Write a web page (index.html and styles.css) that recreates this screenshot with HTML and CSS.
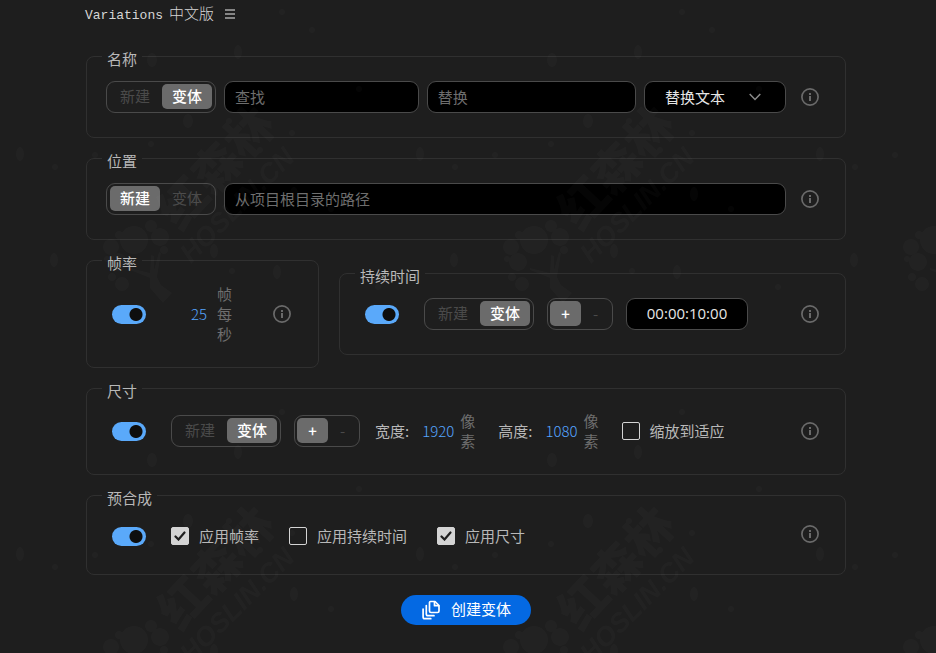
FILE: index.html
```html
<!DOCTYPE html>
<html lang="zh-CN">
<head>
    <meta charset="UTF-8">
    <meta name="viewport" content="width=device-width, initial-scale=1.0">
    <title>Variations 中文版</title>
    <link rel="stylesheet" href="styles.css">
</head>
<body>
    <!-- shared icons -->
    <svg class="sprite" aria-hidden="true">
        <symbol id="icon-info" viewBox="0 0 18 18">
            <circle cx="9" cy="9" r="8.1" fill="none" stroke="currentColor" stroke-width="1.7"/>
            <rect x="8" y="5" width="2" height="2" fill="currentColor"/>
            <rect x="8" y="8" width="2" height="5" fill="currentColor"/>
        </symbol>
    </svg>

    <header class="titlebar">
        <h1 class="title"><span class="title-latin">Variations</span> <span>中文版</span></h1>
        <button type="button" class="menu-btn" aria-label="菜单">
            <svg width="10" height="10" viewBox="0 0 10 10" fill="#858585">
                <rect width="10" height="2"/>
                <rect y="4" width="10" height="2"/>
                <rect y="8" width="10" height="2"/>
            </svg>
        </button>
    </header>

    <form class="variations">
        <!-- name -->
        <fieldset class="panel">
            <legend>名称</legend>
            <div class="row row-fields">
                <div class="segment">
                    <button type="button">新建</button>
                    <button type="button" class="active">变体</button>
                </div>
                <input type="text" class="field field-find" placeholder="查找" aria-label="查找">
                <input type="text" class="field field-replace" placeholder="替换" aria-label="替换">
                <select class="field select" aria-label="替换方式">
                    <option>替换文本</option>
                </select>
                <button type="button" class="info" aria-label="信息"><svg><use href="#icon-info"/></svg></button>
            </div>
        </fieldset>

        <!-- location -->
        <fieldset class="panel">
            <legend>位置</legend>
            <div class="row row-fields">
                <div class="segment">
                    <button type="button" class="active">新建</button>
                    <button type="button">变体</button>
                </div>
                <input type="text" class="field field-path" placeholder="从项目根目录的路径" aria-label="路径">
                <button type="button" class="info" aria-label="信息"><svg><use href="#icon-info"/></svg></button>
            </div>
        </fieldset>

        <div class="columns">
            <!-- frame rate -->
            <fieldset class="panel panel-fps">
                <legend>帧率</legend>
                <div class="row">
                    <input type="checkbox" class="toggle" aria-label="帧率" checked>
                    <div class="value value-fps">
                        <button type="button" class="number">25</button>
                        <span class="unit">帧每秒</span>
                    </div>
                    <button type="button" class="info" aria-label="信息"><svg><use href="#icon-info"/></svg></button>
                </div>
            </fieldset>

            <!-- duration -->
            <fieldset class="panel panel-duration">
                <legend>持续时间</legend>
                <div class="row">
                    <input type="checkbox" class="toggle" aria-label="持续时间" checked>
                    <div class="segment">
                        <button type="button">新建</button>
                        <button type="button" class="active">变体</button>
                    </div>
                    <div class="segment sign">
                        <button type="button" class="active">+</button>
                        <button type="button">-</button>
                    </div>
                    <input type="text" class="field timecode" value="00:00:10:00" aria-label="时间码">
                    <button type="button" class="info" aria-label="信息"><svg><use href="#icon-info"/></svg></button>
                </div>
            </fieldset>
        </div>

        <!-- size -->
        <fieldset class="panel panel-size">
            <legend>尺寸</legend>
            <div class="row">
                <input type="checkbox" class="toggle" aria-label="尺寸" checked>
                <div class="segment">
                    <button type="button">新建</button>
                    <button type="button" class="active">变体</button>
                </div>
                <div class="segment sign">
                    <button type="button" class="active">+</button>
                    <button type="button">-</button>
                </div>
                <div class="value">
                    <span class="value-name">宽度:</span>
                    <button type="button" class="number">1920</button>
                    <span class="unit">像素</span>
                </div>
                <div class="value value-height">
                    <span class="value-name">高度:</span>
                    <button type="button" class="number">1080</button>
                    <span class="unit">像素</span>
                </div>
                <label class="check check-fit"><input type="checkbox">缩放到适应</label>
                <button type="button" class="info" aria-label="信息"><svg><use href="#icon-info"/></svg></button>
            </div>
        </fieldset>

        <!-- precomps -->
        <fieldset class="panel panel-precomp">
            <legend>预合成</legend>
            <div class="row">
                <input type="checkbox" class="toggle" aria-label="预合成" checked>
                <div class="checks">
                    <label class="check"><input type="checkbox" checked>应用帧率</label>
                    <label class="check"><input type="checkbox">应用持续时间</label>
                    <label class="check"><input type="checkbox" checked>应用尺寸</label>
                </div>
                <button type="button" class="info" aria-label="信息"><svg><use href="#icon-info"/></svg></button>
            </div>
        </fieldset>

        <button type="button" class="create-btn">
            <svg width="18" height="20" viewBox="0 0 18 20" fill="none" stroke="#fff" stroke-width="1.7" stroke-linejoin="round" stroke-linecap="round">
                <path d="M8.500 1.500h4.500l4 4v5.500c0 .8-.6 1.500-1.500 1.500H9c-.8 0-1.500-.6-1.500-1.500V2.500c0-.6.4-1 1-1z"/>
                <path d="M12.500 1.800v3.900h4"/>
                <path d="M4.300 5.500v8.500c0 1 .7 1.700 1.700 1.700h6"/>
                <path d="M1.100 9v8c0 1 .7 1.700 1.700 1.700h6"/>
            </svg>
            <span class="create-text">创建变体</span>
        </button>
    </form>

    <!-- watermark -->
    <svg class="watermark" aria-hidden="true">
        <defs>
            <pattern id="mark" width="400" height="400" patternUnits="userSpaceOnUse">
                <circle cx="134" cy="240" r="14"/>
                <circle cx="111" cy="247" r="8"/>
                <circle cx="119" cy="235" r="4"/>
                <circle cx="118" cy="262" r="9"/>
                <circle cx="107" cy="259" r="3"/>
                <circle cx="151" cy="226" r="6"/>
                <circle cx="160" cy="237" r="9"/>
                <circle cx="164" cy="250" r="4"/>
                <circle cx="122" cy="284" r="7"/>
                <circle cx="112" cy="277" r="4"/>
                <path d="M130 268l20 5 1-18 3 1v14l5-18 2 1-4 24 4 8 11 8-9 10-13-15v-10l-20-8z"/>
                <text class="mark-name" transform="translate(180 232) rotate(-47)">红森林</text>
                <text class="mark-site" transform="translate(191 264) rotate(-45)">HOSLIN.CN</text>
                <ellipse cx="188" cy="121" rx="5" ry="7"/>
                <ellipse cx="214" cy="251" rx="4" ry="7"/>
                <ellipse cx="277" cy="272" rx="4" ry="7"/>
                <ellipse cx="294" cy="194" rx="4" ry="7"/>
                <ellipse cx="20" cy="154" rx="4" ry="7"/>
                <ellipse cx="54" cy="260" rx="4" ry="7"/>
                <ellipse cx="152" cy="60" rx="5" ry="7"/>
                <ellipse cx="238" cy="52" rx="4" ry="7"/>
                <circle cx="151" cy="144" r="3"/>
                <circle cx="229" cy="121" r="3"/>
                <circle cx="260" cy="150" r="3"/>
                <circle cx="292" cy="133" r="3"/>
                <circle cx="55" cy="167" r="3"/>
                <circle cx="95" cy="155" r="3"/>
                <circle cx="359" cy="89" r="3"/>
                <circle cx="312" cy="30" r="3"/>
                <circle cx="232" cy="271" r="3"/>
                <circle cx="378" cy="287" r="3"/>
                <circle cx="331" cy="209" r="3"/>
                <circle cx="282" cy="12" r="3"/>
            </pattern>
        </defs>
        <rect width="100%" height="100%" fill="url(#mark)"/>
    </svg>
</body>
</html>
```

FILE: styles.css
```css
* {
    box-sizing: border-box;
}

body {
    margin: 0;
    background: #1e1e1e;
    color: #b8b8b8;
    font-family: "Noto Sans CJK SC", sans-serif;
    font-size: 15px;
    line-height: 20px;
}

button,
input,
select {
    margin: 0;
    font: inherit;
    color: inherit;
}

button {
    padding: 0;
    border: none;
    background: none;
    cursor: pointer;
}

svg {
    display: block;
}

.sprite {
    position: absolute;
    width: 0;
    height: 0;
}

.titlebar {
    display: flex;
    align-items: center;
    gap: 11px;
    height: 28px;
    padding: 0 85px;
}

.title {
    display: flex;
    align-items: baseline;
    gap: 6px;
    margin: 0;
    font-size: 15px;
    font-weight: 300;
    color: #d6d6d6;
}

.title-latin {
    font-family: "Liberation Mono", monospace;
    font-size: 13px;
}

.variations {
    display: flex;
    flex-direction: column;
    gap: 6px;
    padding: 14px 90px 28px 86px;
}

/* panels */
.panel {
    min-width: 0;
    margin: 0;
    padding: 10px 26px 24px 19px;
    border: 1px solid #303030;
    border-radius: 8px;
}

.panel legend {
    margin-left: -4px;
    padding: 6px 5px 2px;
    line-height: 21px;
}

.columns {
    display: flex;
    align-items: center;
    gap: 20px;
}

.panel-fps {
    flex: 0 0 233px;
    padding: 9px 27px 23px 19px;
}

.panel-duration {
    flex: 1;
}

.panel-size {
    padding-top: 8px;
    padding-bottom: 23px;
}

.panel-precomp {
    padding-bottom: 22px;
}

.row {
    display: flex;
    align-items: center;
    gap: 13px;
    min-height: 32px;
}

.row-fields {
    gap: 8px;
}

/* segmented buttons */
.segment {
    display: flex;
    flex: none;
    gap: 2px;
    height: 32px;
    padding: 2px 3px 3px;
    border: 1px solid #4a4a4a;
    border-radius: 9px;
}

.segment button {
    width: 50px;
    padding-bottom: 2px;
    border-radius: 5px;
    color: #4a4a4a;
}

.segment .active {
    background: #6b6b6b;
    color: #fff;
    font-weight: 500;
}

.sign {
    gap: 0;
    padding: 2px 2px 3px;
}

.sign button {
    width: 29px;
    padding-bottom: 0;
}

.sign .active {
    width: 31px;
}

/* text fields */
.field {
    min-width: 0;
    height: 32px;
    padding: 0 10px 2px;
    border: 1px solid #4a4a4a;
    border-radius: 9px;
    background-color: #000;
    color: #e6e6e6;
}

.field::placeholder {
    color: #6e6e6e;
}

.field-find {
    flex: 12;
}

.field-replace {
    flex: 13;
}

.field-path {
    flex: 1;
}

.select {
    width: 142px;
    padding: 0 20px;
    appearance: none;
    background-image: url("data:image/svg+xml,%3Csvg xmlns='http://www.w3.org/2000/svg' width='12' height='8' fill='none' stroke='%238a8a8a' stroke-width='1.5'%3E%3Cpath d='M.7 1l5.300 5.500L11.300 1'/%3E%3C/svg%3E");
    background-repeat: no-repeat;
    background-position: right 24px center;
}

.timecode {
    width: 122px;
    font-family: "Open Sans", sans-serif;
    text-align: center;
}

.info {
    flex: none;
    margin-left: auto;
    color: #6a6a6a;
}

.info svg {
    width: 18px;
    height: 18px;
}

.row-fields .info {
    margin-left: 7px;
}

.panel-precomp .info {
    padding-bottom: 4px;
}

/* on/off switch */
.toggle {
    flex: none;
    width: 34px;
    height: 19px;
    margin: 0 12px 0 6px;
    appearance: none;
    border-radius: 10px;
    background: radial-gradient(circle at 24px center, #0e0e0e 6px, #5aa9fa 7px);
}

.toggle:not(:checked) {
    background: radial-gradient(circle at 10px center, #0e0e0e 6px, #6b6b6b 7px);
}

/* numbers with a unit */
.value {
    display: flex;
    align-items: center;
    margin-left: 2px;
}

.value-fps {
    margin-left: 20px;
}

.value-name {
    margin-right: 13px;
}

.value-height {
    margin-left: 9px;
}

.number {
    margin-right: 6px;
    color: #55a5ff;
    font-weight: 300;
}

.value-fps .number {
    margin-right: 10px;
}

.unit {
    width: 16px;
    color: #6e6e6e;
}

/* tick boxes */
.checks {
    display: flex;
    gap: 30px;
}

.check {
    display: flex;
    align-items: center;
    gap: 10px;
}

.check-fit {
    margin-left: 9px;
}

.check input {
    width: 18px;
    height: 18px;
    appearance: none;
    border: 1px solid #d4d4d4;
    border-radius: 2px;
}

.check input:checked {
    background: #d4d4d4 url("data:image/svg+xml,%3Csvg xmlns='http://www.w3.org/2000/svg' width='12' height='10' fill='none' stroke='%231e1e1e' stroke-width='2.200' stroke-linecap='round'%3E%3Cpath d='M1.500 5.500l3 3L10.500 1.500'/%3E%3C/svg%3E") center no-repeat;
}

.create-btn {
    display: flex;
    align-items: center;
    align-self: center;
    gap: 11px;
    height: 30px;
    margin-top: 14px;
    padding: 0 20px 0 21px;
    border-radius: 15px;
    background: #0469e3;
    color: #fff;
}

.create-text {
    padding-bottom: 2px;
}

.watermark {
    position: fixed;
    inset: 0;
    width: 100%;
    height: 100%;
    fill: #fff;
    opacity: 0.02;
    pointer-events: none;
}

.mark-name {
    font-size: 48px;
    font-weight: 900;
}

.mark-site {
    font-family: "Liberation Sans", sans-serif;
    font-size: 27px;
    font-weight: bold;
    font-style: italic;
}
```
